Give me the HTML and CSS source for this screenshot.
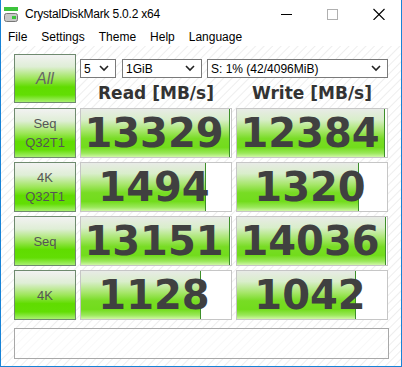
FILE: index.html
```html
<!DOCTYPE html>
<html>
<head>
<meta charset="utf-8">
<link rel="stylesheet" href="styles.css">
</head>
<body>
<div class="window">
  <div class="titlebar">
    <svg class="appicon" width="16" height="16" viewBox="0 0 16 16">
      <rect x="0" y="0" width="14" height="4" fill="#3cc43c"/>
      <rect x="0.5" y="6.5" width="13" height="8" rx="2" fill="#c8c8c8" stroke="#777"/>
      <rect x="8" y="9" width="4" height="3" fill="#3cc43c"/>
    </svg>
    <span class="title">CrystalDiskMark 5.0.2 x64</span>
    <div class="controls">
      <svg width="12" height="12" viewBox="0 0 12 12"><line x1="0" y1="6.5" x2="11" y2="6.5" stroke="#000" stroke-width="1"/></svg>
      <svg width="12" height="12" viewBox="0 0 12 12"><rect x="0.5" y="1.5" width="10" height="10" fill="none" stroke="#b0b0b0"/></svg>
      <svg width="12" height="12" viewBox="0 0 12 12"><path d="M0.5 1 L11.5 12 M11.5 1 L0.5 12" stroke="#000" stroke-width="1.1"/></svg>
    </div>
  </div>
  <div class="menubar">
    <span>File</span><span>Settings</span><span>Theme</span><span>Help</span><span>Language</span>
  </div>
  <div class="main">
    <div class="grid">
      <div class="label all">All</div>
      <div class="head">
        <div class="selects">
          <div class="sel s1"><span>5</span><svg class="chev" width="10" height="7" viewBox="0 0 10 7"><path d="M1 1 L5 5 L9 1" fill="none" stroke="#222" stroke-width="1.6"/></svg></div>
          <div class="sel s2"><span>1GiB</span><svg class="chev" width="10" height="7" viewBox="0 0 10 7"><path d="M1 1 L5 5 L9 1" fill="none" stroke="#222" stroke-width="1.6"/></svg></div>
          <div class="sel s3"><span>S: 1% (42/4096MiB)</span><svg class="chev" width="10" height="7" viewBox="0 0 10 7"><path d="M1 1 L5 5 L9 1" fill="none" stroke="#222" stroke-width="1.6"/></svg></div>
        </div>
        <div class="heads">
          <div>Read [MB/s]</div>
          <div>Write [MB/s]</div>
        </div>
      </div>

      <div class="label">Seq<br>Q32T1</div>
      <div class="cell"><div class="fill" style="width:99.3%"></div><span class="num">13329</span></div>
      <div class="cell"><div class="fill" style="width:98.7%"></div><span class="num">12384</span></div>

      <div class="label">4K<br>Q32T1</div>
      <div class="cell"><div class="fill" style="width:83%"></div><span class="num">1494</span></div>
      <div class="cell"><div class="fill" style="width:81.5%"></div><span class="num">1320</span></div>

      <div class="label">Seq</div>
      <div class="cell"><div class="fill" style="width:99.3%"></div><span class="num">13151</span></div>
      <div class="cell"><div class="fill" style="width:99.3%"></div><span class="num">14036</span></div>

      <div class="label">4K</div>
      <div class="cell"><div class="fill" style="width:80%"></div><span class="num">1128</span></div>
      <div class="cell"><div class="fill" style="width:79.3%"></div><span class="num">1042</span></div>
    </div>
    <div class="comment"></div>
  </div>
</div>
</body>
</html>
```
FILE: styles.css
```css
html, body {
  margin: 0;
  padding: 0;
  background: #fff;
}
.window {
  width: 402px;
  height: 367px;
  box-sizing: border-box;
  border: 1px solid #1883d7;
  border-top: none;
  display: flex;
  flex-direction: column;
  font-family: "Liberation Sans", Arial, sans-serif;
  overflow: hidden;
}
.titlebar {
  height: 27px;
  display: flex;
  align-items: center;
  background: #fff;
}
.appicon {
  margin-left: 3px;
  margin-top: 2px;
}
.title {
  margin-left: 5px;
  font-size: 12px;
  color: #000;
  letter-spacing: -0.2px;
}
.controls {
  margin-left: auto;
  display: flex;
  gap: 34px;
  margin-right: 16px;
  align-items: center;
}
.menubar {
  height: 19px;
  display: flex;
  align-items: center;
  gap: 14px;
  padding-left: 7px;
  font-size: 12px;
  color: #000;
  background: #fff;
}
.main {
  flex: 1;
  background-color: #fff;
  background-image: repeating-linear-gradient(-45deg, #ffffff 0px, #ffffff 4px, #eeeeee 5px, #ffffff 6px);
  padding: 8px 12px 7px 13px;
  display: flex;
  flex-direction: column;
}
.grid {
  display: grid;
  grid-template-columns: 62px 152px 152px;
  grid-auto-rows: 50px;
  column-gap: 4px;
  row-gap: 4px;
}
.label {
  box-sizing: border-box;
  border: 1px solid #6f8a6f;
  background: linear-gradient(to bottom, #f2f2f2 0%, #dfeed6 25%, #9ee65a 50%, #60dc00 68%, #62de04 85%, #a8f070 100%);
  display: flex;
  align-items: center;
  justify-content: center;
  text-align: center;
  font-family: "Liberation Sans", Arial, sans-serif;
  font-size: 13px;
  line-height: 19px;
  color: #555;
}
.label.all {
  font-family: "Liberation Sans", Arial, sans-serif;
  font-style: italic;
  font-size: 16px;
  color: #666;
  height: 49px;
}
.head {
  grid-column: 2 / 4;
  display: flex;
  flex-direction: column;
}
.selects {
  display: flex;
  margin-top: 5px;
  height: 18px;
}
.sel {
  box-sizing: border-box;
  height: 19px;
  border: 1px solid #7a7a7a;
  background: #fff;
  display: flex;
  align-items: center;
  justify-content: space-between;
  padding: 0 6px 0 3px;
  font-size: 12px;
  color: #000;
}
.s1 { width: 36px; }
.s2 { width: 80px; margin-left: 6px; }
.s3 { width: 181px; margin-left: 5px; }
.chev { flex: none; }
.heads {
  display: grid;
  grid-template-columns: 152px 152px;
  column-gap: 4px;
  margin-top: 6px;
  font-family: "DejaVu Sans", Verdana, sans-serif;
  font-weight: bold;
  font-size: 17px;
  color: #333;
  text-align: center;
}
.cell {
  position: relative;
  box-sizing: border-box;
  border: 1px solid #c6c6c6;
  background: #fff;
  display: flex;
  align-items: center;
  justify-content: center;
  padding-right: 4px;
}
.fill {
  position: absolute;
  left: 0;
  top: 0;
  bottom: 0;
  box-sizing: border-box;
  border-right: 1px solid #3d8f2a;
  background: linear-gradient(to bottom, #e8ebe6 0%, #d9eecb 22%, #a6e66a 45%, #78dc24 62%, #72dc1c 80%, #9ae85a 92%, #d0f6a8 100%);
}
.num {
  position: relative;
  font-family: "DejaVu Sans", Verdana, sans-serif;
  font-weight: bold;
  font-size: 40px;
  color: #404040;
  line-height: 1;
}
.comment {
  margin-top: 8px;
  height: 31px;
  box-sizing: border-box;
  border: 1px solid #a8a8a8;
  background: rgba(255,255,255,0.6);
}
```
